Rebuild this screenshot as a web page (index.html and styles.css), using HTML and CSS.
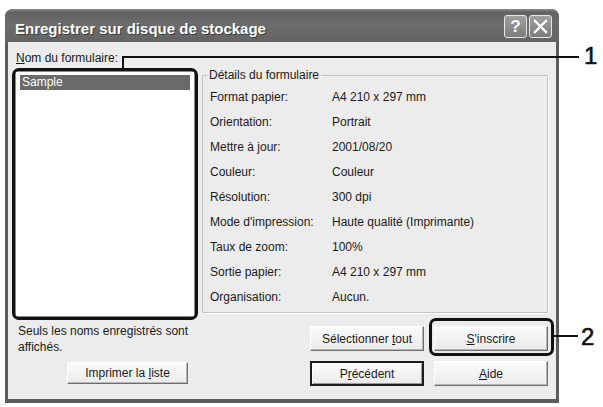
FILE: index.html
```html
<!DOCTYPE html>
<html lang="fr">
<head>
<meta charset="utf-8">
<title>Enregistrer sur disque de stockage</title>
<link rel="stylesheet" href="styles.css">
</head>
<body>
<div class="stage">
  <div class="window">
    <div class="titlebar">
      <span class="title">Enregistrer sur disque de stockage</span>
      <div class="controls">
        <span class="ctl help">?</span>
        <span class="ctl close"><svg width="21" height="21" viewBox="0 0 21 21"><path d="M5 5 L16 16 M16 5 L5 16" stroke="#fff" stroke-width="2.4" stroke-linecap="square"/></svg></span>
      </div>
    </div>
    <div class="client">
      <div class="left">
        <div class="label"><u>N</u>om du formulaire:</div>
        <div class="listbox"><div class="item sel">Sample</div></div>
        <p class="note">Seuls les noms enregistrés sont<br>affichés.</p>
        <button class="btn print">Imprimer la <u>l</u>iste</button>
      </div>
      <div class="right">
        <fieldset class="group">
          <legend>Détails du formulaire</legend>
          <dl class="details">
            <dt>Format papier:</dt><dd>A4 210 x 297 mm</dd>
            <dt>Orientation:</dt><dd>Portrait</dd>
            <dt>Mettre à jour:</dt><dd>2001/08/20</dd>
            <dt>Couleur:</dt><dd>Couleur</dd>
            <dt>Résolution:</dt><dd>300 dpi</dd>
            <dt>Mode d'impression:</dt><dd>Haute qualité (Imprimante)</dd>
            <dt>Taux de zoom:</dt><dd>100%</dd>
            <dt>Sortie papier:</dt><dd>A4 210 x 297 mm</dd>
            <dt>Organisation:</dt><dd>Aucun.</dd>
          </dl>
        </fieldset>
        <div class="buttons">
          <button class="btn">Sélectionner <u>t</u>out</button>
          <button class="btn"><u>S</u>'inscrire</button>
          <button class="btn default">P<u>r</u>écédent</button>
          <button class="btn"><u>A</u>ide</button>
        </div>
      </div>
    </div>
  </div>
  <div class="callout-frame cf-list"></div>
  <div class="callout-line cl-h1"></div>
  <div class="callout-line cl-v1"></div>
  <div class="callout-num num1">1</div>
  <div class="callout-frame cf-ins"></div>
  <div class="callout-line cl-h2"></div>
  <div class="callout-num num2">2</div>
</div>
</body>
</html>
```

FILE: styles.css
```css
* { box-sizing: border-box; }
html, body { margin: 0; padding: 0; background: #fff; }
body {
  font-family: "Liberation Sans", Arial, sans-serif;
  font-size: 12px;
  color: #1a1a1a;
}
.stage {
  position: relative;
  width: 603px;
  height: 407px;
  padding: 9px 0 0 5px;
}
.window {
  width: 554px;
  height: 394px;
  display: flex;
  flex-direction: column;
  background: #5c5c5c;
  border-radius: 8px 8px 0 0;
}
.titlebar {
  height: 33px;
  display: flex;
  align-items: center;
  justify-content: space-between;
  padding: 0 7px 0 10px;
  border-radius: 8px 8px 0 0;
  background: linear-gradient(#8c8c8c 0, #626262 3px, #6c6c6c 45%, #646464 100%);
}
.title {
  color: #fff;
  font-weight: bold;
  font-size: 15px;
  margin-top: 6px;
  text-shadow: 1px 1px 0 #3c3c3c;
}
.controls {
  display: flex;
  gap: 2px;
  margin-top: 2px;
}
.ctl {
  width: 23px;
  height: 23px;
  display: flex;
  align-items: center;
  justify-content: center;
  border: 1px solid #e6e6e6;
  border-radius: 3px;
  background: linear-gradient(#a0a0a0, #7c7c7c);
  color: #fff;
  font-weight: bold;
  font-size: 17px;
}
.client {
  flex: 1;
  margin: 0 3px 4px 3px;
  background: #ececec;
  display: flex;
  padding-left: 7px;
}
.left {
  width: 181px;
  padding-top: 9px;
}
.label {
  line-height: 14px;
  padding-left: 1px;
}
.listbox {
  margin-top: 6px;
  width: 180px;
  height: 246px;
  background: #fff;
  border: 1px solid #8a8a8a;
  padding: 3px 4px;
}
.item {
  height: 15px;
  line-height: 15px;
  padding-left: 2px;
}
.item.sel {
  background: #6a6a6a;
  color: #fff;
}
.note {
  margin: 6px 0 0 3px;
  line-height: 16px;
}
.btn {
  font-family: "Liberation Sans", Arial, sans-serif;
  font-size: 12px;
  color: #1a1a1a;
  padding: 0;
  background: linear-gradient(#fbfbfb, #ebebeb);
  border: 1px solid;
  border-color: #fff #6e6e6e #6e6e6e #fff;
  box-shadow: inset -1px -1px 0 #b8b8b8;
}
.print {
  display: block;
  margin: 7px 0 0 52px;
  width: 121px;
  height: 22px;
}
.right {
  margin-left: 6px;
  padding-top: 26px;
}
.group {
  width: 346px;
  margin: 0;
  padding: 2px 0 3px 0;
  border: 1px solid #c4c4c4;
  box-shadow: 1px 1px 0 #fff;
}
.group legend {
  margin-left: 4px;
  padding: 0 2px;
  line-height: 14px;
}
.details {
  display: grid;
  grid-template-columns: 122px 1fr;
  grid-auto-rows: 25px;
  align-items: center;
  margin: 0;
  padding-left: 7px;
}
.details dt, .details dd { margin: 0; }
.buttons {
  display: grid;
  grid-template-columns: 114px 114px;
  grid-auto-rows: 25px;
  gap: 10px;
  margin: 13px 0 0 108px;
}
.btn.default {
  border: 2px solid #1c1c1c;
  box-shadow: inset 1px 1px 0 #fff, inset -1px -1px 0 #9a9a9a;
}
.callout-frame {
  position: absolute;
  border: 3px solid #111;
  border-radius: 7px;
}
.cf-list { left: 12px; top: 68px; width: 186px; height: 252px; }
.cf-ins { left: 429px; top: 318px; width: 125px; height: 38px; }
.callout-line {
  position: absolute;
  background: #111;
}
.cl-h1 { left: 122px; top: 56px; width: 457px; height: 2px; }
.cl-v1 { left: 122px; top: 56px; width: 2px; height: 13px; }
.cl-h2 { left: 554px; top: 335px; width: 24px; height: 2px; }
.callout-num {
  position: absolute;
  font-size: 24px;
  line-height: 28px;
  color: #111;
  -webkit-text-stroke: 0.6px #111;
}
.num1 { left: 584px; top: 42px; }
.num2 { left: 581px; top: 323px; }
```
